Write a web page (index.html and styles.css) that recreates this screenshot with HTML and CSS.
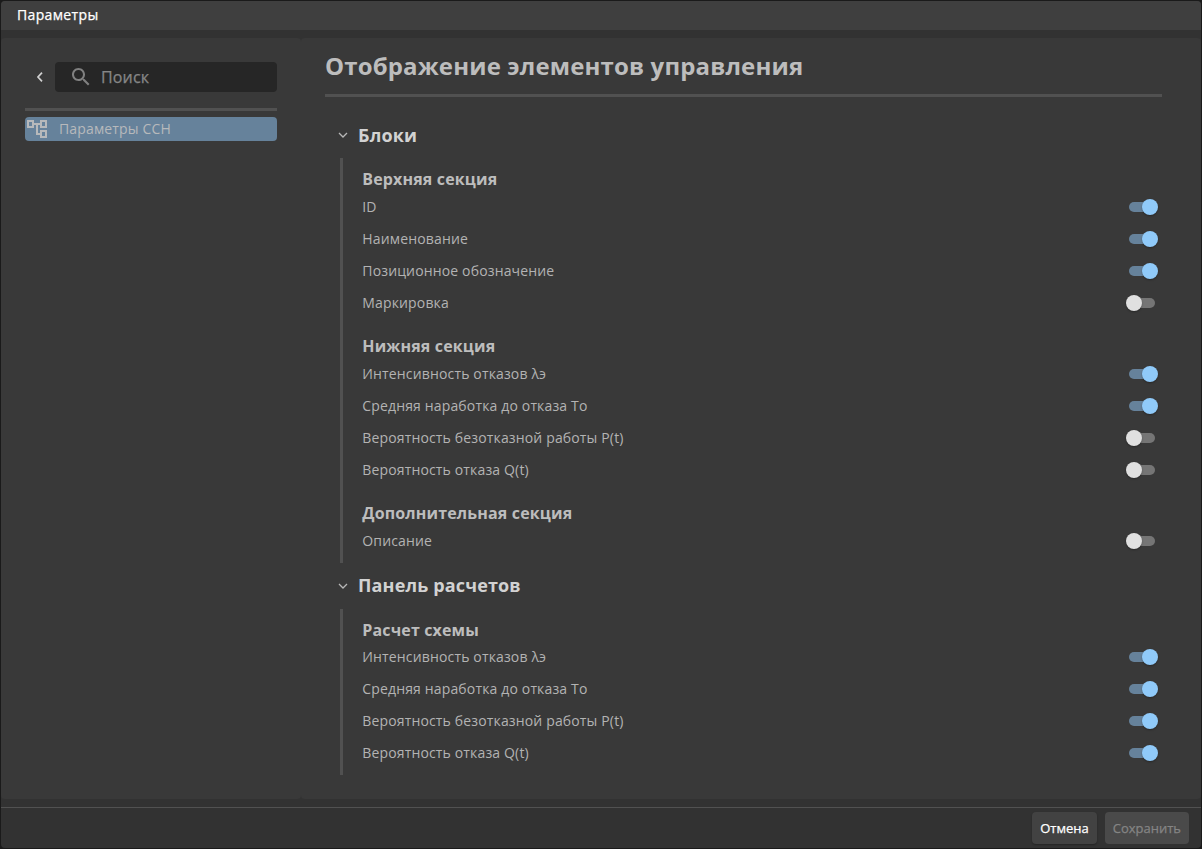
FILE: index.html
```html
<!DOCTYPE html>
<html lang="ru">
<head>
  <meta charset="UTF-8" />
  <meta name="viewport" content="width=device-width, initial-scale=1.0"/>
  <title>Параметры</title>
  <link rel="stylesheet" href="styles.css">
</head>
<body>
  <div class="window">
    <header class="window-header">Параметры</header>

    <div class="window-body">
      <aside class="sidebar">
        <div class="search-row">
          <button class="back" aria-label="Назад">
            <svg width="8" height="12" viewBox="0 0 8 12"><path d="M6 1.7 2 6l4 4.3" fill="none" stroke="currentColor" stroke-width="1.7"/></svg>
          </button>
          <label class="search">
            <svg width="24" height="24" viewBox="0 0 24 24" fill="currentColor"><path d="M15.5 14h-.79l-.28-.27C15.41 12.59 16 11.11 16 9.5 16 5.91 13.09 3 9.5 3S3 5.91 3 9.5 5.91 16 9.5 16c1.61 0 3.09-.59 4.23-1.57l.27.28v.79l5 4.99L20.49 19l-4.99-5zm-6 0C7.01 14 5 11.99 5 9.5S7.01 5 9.5 5 14 7.01 14 9.5 11.99 14 9.5 14z"/></svg>
            <input type="text" placeholder="Поиск">
          </label>
        </div>
        <a class="nav-item">
          <svg width="24" height="24" viewBox="0 0 24 24" fill="currentColor"><path d="M22 11V3h-7v3H9V3H2v8h7V8h2v10h4v3h7v-8h-7v3h-2V8h2v3h7zM7 9H4V5h3v4zm10 6h3v4h-3v-4zm0-10h3v4h-3V5z"/></svg>
          <span>Параметры ССН</span>
        </a>
      </aside>

      <main class="content">
        <h1>Отображение элементов управления</h1>

        <h2>
          <svg width="10" height="6" viewBox="0 0 10 6"><path d="M1 1l4 4 4-4" fill="none" stroke="currentColor" stroke-width="1.3"/></svg>
          Блоки
        </h2>
        <div class="group">
          <section>
            <h3>Верхняя секция</h3>
            <div class="row">ID <span class="switch on"></span></div>
            <div class="row">Наименование <span class="switch on"></span></div>
            <div class="row">Позиционное обозначение <span class="switch on"></span></div>
            <div class="row">Маркировка <span class="switch"></span></div>
          </section>
          <section>
            <h3>Нижняя секция</h3>
            <div class="row">Интенсивность отказов λэ <span class="switch on"></span></div>
            <div class="row">Средняя наработка до отказа То <span class="switch on"></span></div>
            <div class="row">Вероятность безотказной работы P(t) <span class="switch"></span></div>
            <div class="row">Вероятность отказа Q(t) <span class="switch"></span></div>
          </section>
          <section>
            <h3>Дополнительная секция</h3>
            <div class="row">Описание <span class="switch"></span></div>
          </section>
        </div>

        <h2>
          <svg width="10" height="6" viewBox="0 0 10 6"><path d="M1 1l4 4 4-4" fill="none" stroke="currentColor" stroke-width="1.3"/></svg>
          Панель расчетов
        </h2>
        <div class="group">
          <section>
            <h3>Расчет схемы</h3>
            <div class="row">Интенсивность отказов λэ <span class="switch on"></span></div>
            <div class="row">Средняя наработка до отказа То <span class="switch on"></span></div>
            <div class="row">Вероятность безотказной работы P(t) <span class="switch on"></span></div>
            <div class="row">Вероятность отказа Q(t) <span class="switch on"></span></div>
          </section>
        </div>
      </main>
    </div>

    <footer class="window-footer">
      <button class="btn">Отмена</button>
      <button class="btn" disabled>Сохранить</button>
    </footer>
  </div>
</body>
</html>
```

FILE: styles.css
```css
* {
  box-sizing: border-box;
}

body {
  margin: 0;
  height: 100vh;
  padding: 1px;
  background-color: #1a1a1a;
  font-family: 'Open Sans', sans-serif;
  font-size: 14px;
  letter-spacing: 0.15px;
  color: #b3b3b3;
  overflow: hidden;
}

button, input {
  font-family: inherit;
}

.window {
  display: flex;
  flex-direction: column;
  height: 100%;
  background-color: #323232;
  border-radius: 4px;
  overflow: hidden;
}

.window-header {
  height: 29px;
  padding-left: 16px;
  background-color: #3f3f3f;
  color: #fff;
  letter-spacing: 0.35px;
  line-height: 28px;
  -webkit-text-stroke: 0.25px;
}

.window-body {
  display: flex;
  flex: 1;
  padding: 8px 0;
}

.sidebar, .content {
  background-color: #393939;
  border-radius: 4px;
}

.sidebar {
  width: 300px;
  padding: 24px;
}

.search-row {
  display: flex;
  align-items: center;
  padding-bottom: 16px;
  border-bottom: 3px solid #515151;
  margin-bottom: 6px;
}

.back {
  display: flex;
  justify-content: center;
  width: 30px;
  padding: 0;
  border: none;
  background: none;
  color: #d0d0d0;
}

.search {
  display: flex;
  align-items: center;
  flex: 1;
  height: 30px;
  padding-left: 14px;
  gap: 8px;
  border-radius: 4px;
  background-color: #262626;
  color: #808080;
}

.search input {
  width: 150px;
  padding: 0;
  border: none;
  outline: none;
  background: none;
  font-size: 16px;
  letter-spacing: inherit;
  color: #b3b3b3;
  -webkit-text-stroke: 0.25px;
}

.search input::placeholder {
  color: #868686;
}

.nav-item {
  display: flex;
  align-items: center;
  gap: 10px;
  height: 24px;
  border-radius: 4px;
  background-color: #66829b;
  line-height: 20px;
  color: #b7b9bb;
}

.content {
  flex: 1;
  padding: 10px 39px 0 24px;
}

h1 {
  height: 49px;
  margin: 0 0 15px;
  border-bottom: 3px solid #515151;
  font-size: 24px;
  line-height: 36px;
  color: #bdbdbd;
}

h2 {
  display: flex;
  align-items: center;
  gap: 10px;
  height: 46px;
  margin: 0;
  padding: 0 0 0.6px 13px;
  font-size: 18px;
  color: #d2d2d2;
}

h2 svg {
  margin-top: 1px;
  color: #b8b8b8;
}

.group {
  display: flex;
  flex-direction: column;
  gap: 15.4px;
  margin-left: 15px;
  padding: 9px 4px 6px 19.3px;
  border-left: 3px solid #515151;
}

h3 {
  height: 23.6px;
  margin: 0;
  font-size: 16px;
  line-height: 24px;
  color: #bdbdbd;
}

.row {
  display: flex;
  align-items: center;
  justify-content: space-between;
  height: 32px;
  line-height: 20px;
}

.switch {
  display: flex;
  align-items: center;
  width: 26px;
  height: 10px;
  margin-right: 3px;
  border-radius: 5px;
  background-color: #757575;
}

.switch::before {
  content: "";
  flex: none;
  width: 16px;
  height: 16px;
  margin-left: -3px;
  border-radius: 50%;
  background-color: #e0e0e0;
  box-shadow: 0 1px 2px rgba(0, 0, 0, 0.3);
}

.switch.on {
  background-color: #66829b;
}

.switch.on::before {
  margin-left: 13px;
  background-color: #90caf9;
}

.window-footer {
  display: flex;
  justify-content: flex-end;
  gap: 8px;
  height: 41px;
  padding: 4px 12px;
  border-top: 1px solid #515151;
}

.btn {
  height: 32px;
  padding: 0 8px;
  border: none;
  border-radius: 4px;
  background-color: #424242;
  box-shadow: 0 1px 2px rgba(0, 0, 0, 0.3);
  font-size: 13px;
  color: #fff;
  -webkit-text-stroke: 0.25px;
}

.btn:disabled {
  background-color: #4a4a4a;
  box-shadow: none;
  color: #848484;
}
```
